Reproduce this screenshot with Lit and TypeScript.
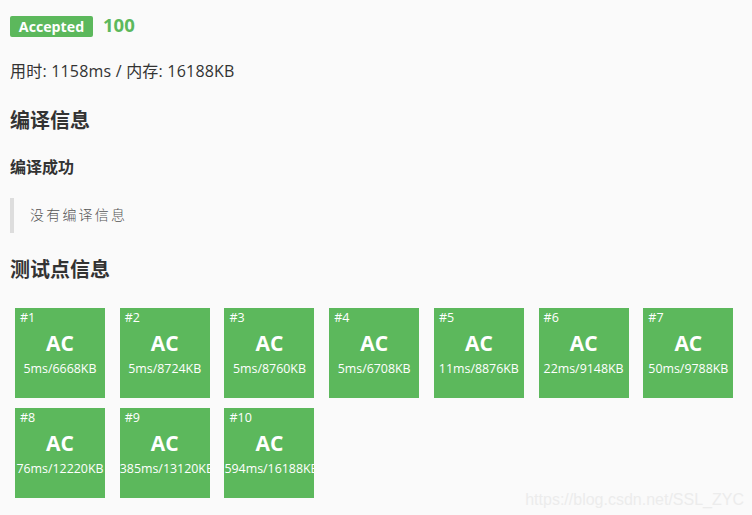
import { LitElement, html, css } from "lit";
import { customElement } from "lit/decorators.js";

const CASES = [
  "5ms/6668KB", "5ms/8724KB", "5ms/8760KB", "5ms/6708KB", "11ms/8876KB", "22ms/9148KB", "50ms/9788KB",
  "76ms/12220KB", "385ms/13120KB", "594ms/16188KB",
];

@customElement("app-root")
export class AppRoot extends LitElement {
  static styles = css`
    :host {
      display: block;
      width: 752px;
      height: 515px;
      overflow: hidden;
      position: relative;
      background: #fafafa;
      color: #333;
      font-family: "Open Sans", "Noto Sans CJK SC", sans-serif;
      font-size: 14px;
    }
    .page { padding: 16px 0 0 10px; }
    .result { display: flex; align-items: center; gap: 10px; height: 21px; }
    .badge {
      background: #5cb85c; color: #fff; font-weight: 700; font-size: 14.2px; line-height: 21px;
      height: 21px; width: 83px; text-align: center; border-radius: 2px;
    }
    .score { color: #5cb85c; font-weight: 700; font-size: 18.5px; line-height: 21px; margin-top: -4px; }
    .stat { margin-top: 24px; font-size: 16px; letter-spacing: 0.2px; line-height: 20px; height: 20px; color: #333; }
    h3 { margin: 0; font-size: 20px; line-height: 26px; font-weight: 700; color: #333; }
    h4 { margin: 0; font-size: 16px; line-height: 22px; font-weight: 700; color: #333; }
    .t1 { margin-top: 27px; }
    .t2 { margin-top: 22px; }
    .t3 { margin-top: 24px; }
    blockquote {
      margin: 20px 0 0 0; height: 35px; border-left: 4px solid #ddd; padding-left: 16px;
      font-family: "Liberation Serif", "Noto Sans CJK SC", serif; font-weight: 300;
      font-size: 14px; line-height: 35px; letter-spacing: 2.2px; color: #555;
    }
    .grid {
      margin: 25px 0 0 5px; display: grid; grid-template-columns: repeat(7, 90px);
      column-gap: 14.72px; row-gap: 10px;
    }
    .case {
      width: 90px; height: 90px; background: #5cb85c; color: #fff; position: relative;
      overflow: hidden; text-align: center;
    }
    .id { position: absolute; left: 5px; top: 2px; font-size: 12.5px; line-height: 16px; }
    .ac { display: block; padding-top: 20px; font-size: 21px; font-weight: 700; line-height: 30px; }
    .info { display: block; margin-top: 2px; font-size: 12.4px; line-height: 18px; white-space: nowrap; }
    .mark {
      position: absolute; right: 8px; bottom: 5px; font-family: "Liberation Sans", sans-serif;
      font-size: 16px; line-height: 20px; color: #ececec;
    }
  `;

  render() {
    return html`<div class="page">
        <div class="result"><span class="badge">Accepted</span><span class="score">100</span></div>
        <div class="stat">用时: 1158ms / 内存: 16188KB</div>
        <h3 class="t1">编译信息</h3>
        <h4 class="t2">编译成功</h4>
        <blockquote>没有编译信息</blockquote>
        <h3 class="t3">测试点信息</h3>
        <div class="grid">
          ${CASES.map(
            (c, i) => html`<div class="case">
              <span class="id">#${i + 1}</span>
              <span class="ac">AC</span>
              <span class="info">${c}</span>
            </div>`
          )}
        </div>
      </div>
      <div class="mark">https://blog.csdn.net/SSL_ZYC</div>`;
  }
}
